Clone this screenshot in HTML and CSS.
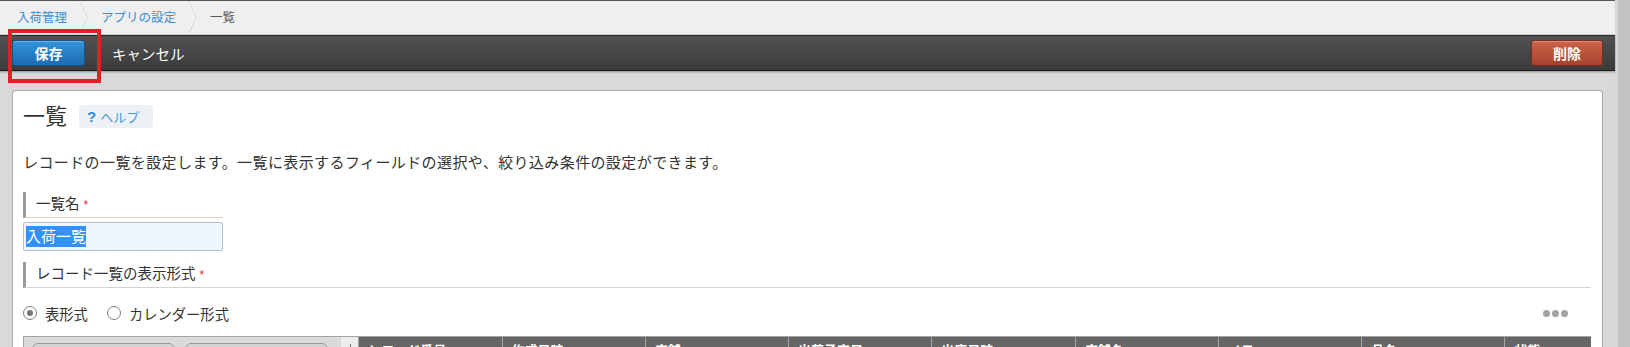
FILE: index.html
```html
<html>
	<head>
		<meta charset="utf-8">
		<link rel="stylesheet" href="styles.css">
	</head>
	<body>
		<div class="screen">
			<div class="page">
				<nav class="crumbs">
					<a class="crumb">入荷管理</a>
					<svg class="sep" width="10" height="33" viewBox="0 0 10 33"><polyline points="1,0 9,16.5 1,33" fill="none" stroke="#d2d2d2" stroke-width="1"/><polyline points="0,0 8,16.5 0,33" fill="none" stroke="#fafafa" stroke-width="1"/></svg>
					<a class="crumb">アプリの設定</a>
					<svg class="sep" width="10" height="33" viewBox="0 0 10 33"><polyline points="1,0 9,16.5 1,33" fill="none" stroke="#d2d2d2" stroke-width="1"/><polyline points="0,0 8,16.5 0,33" fill="none" stroke="#fafafa" stroke-width="1"/></svg>
					<span class="crumb current">一覧</span>
				</nav>

				<div class="toolbar">
					<button class="btn btn-save">保存</button>
					<button class="btn-cancel">キャンセル</button>
					<span class="spacer"></span>
					<button class="btn btn-delete">削除</button>
				</div>

				<div class="content">
					<section class="panel">
						<div class="panel-head">
							<h1>一覧</h1>
							<a class="help"><span class="q">?</span>ヘルプ</a>
						</div>

						<p class="desc">レコードの一覧を設定します。一覧に表示するフィールドの選択や、絞り込み条件の設定ができます。</p>

						<div class="label short">一覧名 <span class="req">*</span></div>
						<div class="input"><span class="sel">入荷一覧</span></div>

						<div class="label">レコード一覧の表示形式 <span class="req">*</span></div>

						<div class="radios">
							<span class="radio checked"></span><span class="radio-text">表形式</span>
							<span class="radio"></span><span class="radio-text">カレンダー形式</span>
							<span class="spacer"></span>
							<span class="dots"><i></i><i></i><i></i></span>
						</div>

						<div class="grid">
							<div class="grid-left">
								<span class="tab"></span>
								<span class="tab"></span>
							</div>
							<div class="grid-gap"><span class="tick"></span></div>
							<div class="col">レコード番号</div>
							<div class="col">作成日時</div>
							<div class="col">店舗</div>
							<div class="col">出荷予定日</div>
							<div class="col">出庫日時</div>
							<div class="col">店舗名</div>
							<div class="col">メモ</div>
							<div class="col">品名</div>
							<div class="col last">状態</div>
						</div>
					</section>
				</div>
			</div>
			<div class="scrollbar"></div>
		</div>
		<div class="mark"></div>
	</body>
</html>
```

FILE: styles.css
```css
body {
	margin: 0;
	height: 347px;
	overflow: hidden;
	background-color: #d8d9da;
	font-family: "Liberation Sans", "Noto Sans CJK JP", sans-serif;
	color: #333;
}

.screen {
	display: flex;
	height: 347px;
	overflow: hidden;
}

.page {
	flex: 1;
	display: flex;
	flex-direction: column;
	min-width: 0;
}

.spacer {
	flex: 1;
}

/* breadcrumb */
.crumbs {
	flex: none;
	display: flex;
	align-items: center;
	height: 33px;
	padding-left: 17px;
	border-top: 1px solid #555;
	border-bottom: 1px solid #cfcfcf;
	background-color: #efefef;
	font-size: 12.5px;
}
.crumb {
	color: #3d8ed3;
	padding-bottom: 3px;
}
.crumb.current {
	color: #555;
}
.sep {
	margin: 0 13px 0 11px;
	flex: none;
}

/* toolbar */
.toolbar {
	flex: none;
	display: flex;
	align-items: center;
	height: 34px;
	padding: 0 12px;
	border-top: 1px solid #2b2b2b;
	border-bottom: 1px solid #1b1b1b;
	background: linear-gradient(#515151, #3b3b3b);
	box-shadow: 0 1px 2px rgba(0, 0, 0, 0.35);
	position: relative;
}
.btn {
	width: 73px;
	height: 26px;
	border-radius: 3px;
	color: white;
	font-family: inherit;
	font-size: 14px;
	font-weight: bold;
	cursor: pointer;
	padding: 0;
}
.btn-save {
	border: 1px solid #18528a;
	background: linear-gradient(#3594db, #1c6cb3);
	box-shadow: inset 0 1px 0 rgba(255, 255, 255, 0.3);
}
.btn-delete {
	width: 72px;
	border: 1px solid #7a2d1d;
	background: linear-gradient(#cd634b, #a6432d);
	box-shadow: inset 0 1px 0 rgba(255, 255, 255, 0.3);
}
.btn-cancel {
	margin-left: 27px;
	padding: 0;
	border: none;
	background: none;
	color: white;
	font-family: inherit;
	font-size: 14.5px;
}

/* content */
.content {
	flex: 1;
	min-height: 0;
	padding: 19px 12px 0;
}
.panel {
	height: 100%;
	box-sizing: border-box;
	overflow: hidden;
	padding: 14px 11px 0 10px;
	border: 1px solid #a9a9a9;
	border-bottom: none;
	border-radius: 4px 4px 0 0;
	background-color: white;
}

.panel-head {
	display: flex;
	align-items: center;
	height: 23px;
}
.panel-head h1 {
	margin: 0 12px 0 0;
	font-size: 22px;
	font-weight: normal;
	line-height: 23px;
	color: #333;
}
.help {
	display: flex;
	align-items: center;
	height: 23px;
	padding: 0 14px 0 8px;
	border-radius: 4px;
	background-color: #edf1f5;
	color: #4a9ad8;
	font-size: 13px;
}
.help .q {
	margin-right: 4px;
	font-size: 15px;
	font-weight: bold;
	color: #3190dc;
}

.desc {
	margin: 25px 0 0;
	font-size: 15px;
	letter-spacing: 0.4px;
	line-height: 20px;
}

.label {
	height: 25px;
	margin-top: 19px;
	padding-left: 10px;
	border-left: 3px solid #9a9a9a;
	border-bottom: 1px solid #d6d1cc;
	font-size: 14.5px;
	line-height: 25px;
}
.label.short {
	width: 187px;
}
.label + .input {
	margin-top: 4px;
}
.input + .label {
	margin-top: 11px;
}
.req {
	color: #e0242a;
	font-size: 12px;
}

.input {
	box-sizing: border-box;
	width: 200px;
	height: 29px;
	padding: 3px 0 0 2px;
	border: 1px solid #b7bec6;
	border-radius: 2px;
	background-color: #eef7ff;
	font-size: 15px;
	line-height: 21px;
}
.sel {
	display: inline-block;
	background-color: #3390ff;
	color: white;
}

.radios {
	display: flex;
	align-items: center;
	height: 20px;
	margin-top: 15px;
	font-size: 14.3px;
}
.radio {
	width: 12px;
	height: 12px;
	border: 1px solid #808080;
	border-radius: 50%;
	margin-right: 8px;
	position: relative;
	background-color: white;
}
.radio.checked::after {
	content: "";
	position: absolute;
	top: 3px;
	left: 3px;
	width: 6px;
	height: 6px;
	border-radius: 50%;
	background-color: #777;
}
.radio-text {
	margin-right: 19px;
}
.dots {
	display: flex;
	gap: 2px;
	margin-right: 23px;
}
.dots i {
	width: 7px;
	height: 7px;
	border-radius: 50%;
	background-color: #a3a3a3;
}

/* grid header */
.grid {
	display: flex;
	height: 30px;
	margin-top: 13px;
	border-top: 1px solid #a3a3a3;
}
.grid-left {
	display: flex;
	gap: 10px;
	width: 311px;
	padding: 6px 0 0 8px;
	border-left: 1px solid #a3a3a3;
	background-color: #dadada;
}
.tab {
	width: 141px;
	height: 30px;
	border: 1px solid #999;
	border-radius: 6px 6px 0 0;
	background-color: #d4d4d4;
}
.grid-gap {
	width: 17px;
	background-color: #ececec;
}
.tick {
	display: block;
	width: 1px;
	height: 4px;
	margin: 7px 0 0 9px;
	background-color: #777;
}
.col {
	width: 134px;
	padding: 3px 0 0 9px;
	border-left: 1px solid #a5a5a5;
	background-color: #666;
	color: white;
	font-size: 13px;
	font-weight: bold;
	white-space: nowrap;
	overflow: hidden;
}
.col.last {
	width: 77px;
}

.scrollbar {
	width: 12px;
	border-left: 3px solid #d7d7d7;
	background-color: #c2c2c2;
}

/* red annotation box over the save button */
.mark {
	position: absolute;
	left: 8px;
	top: 29px;
	width: 85px;
	height: 46px;
	border: 4px solid #e41e26;
}
```
